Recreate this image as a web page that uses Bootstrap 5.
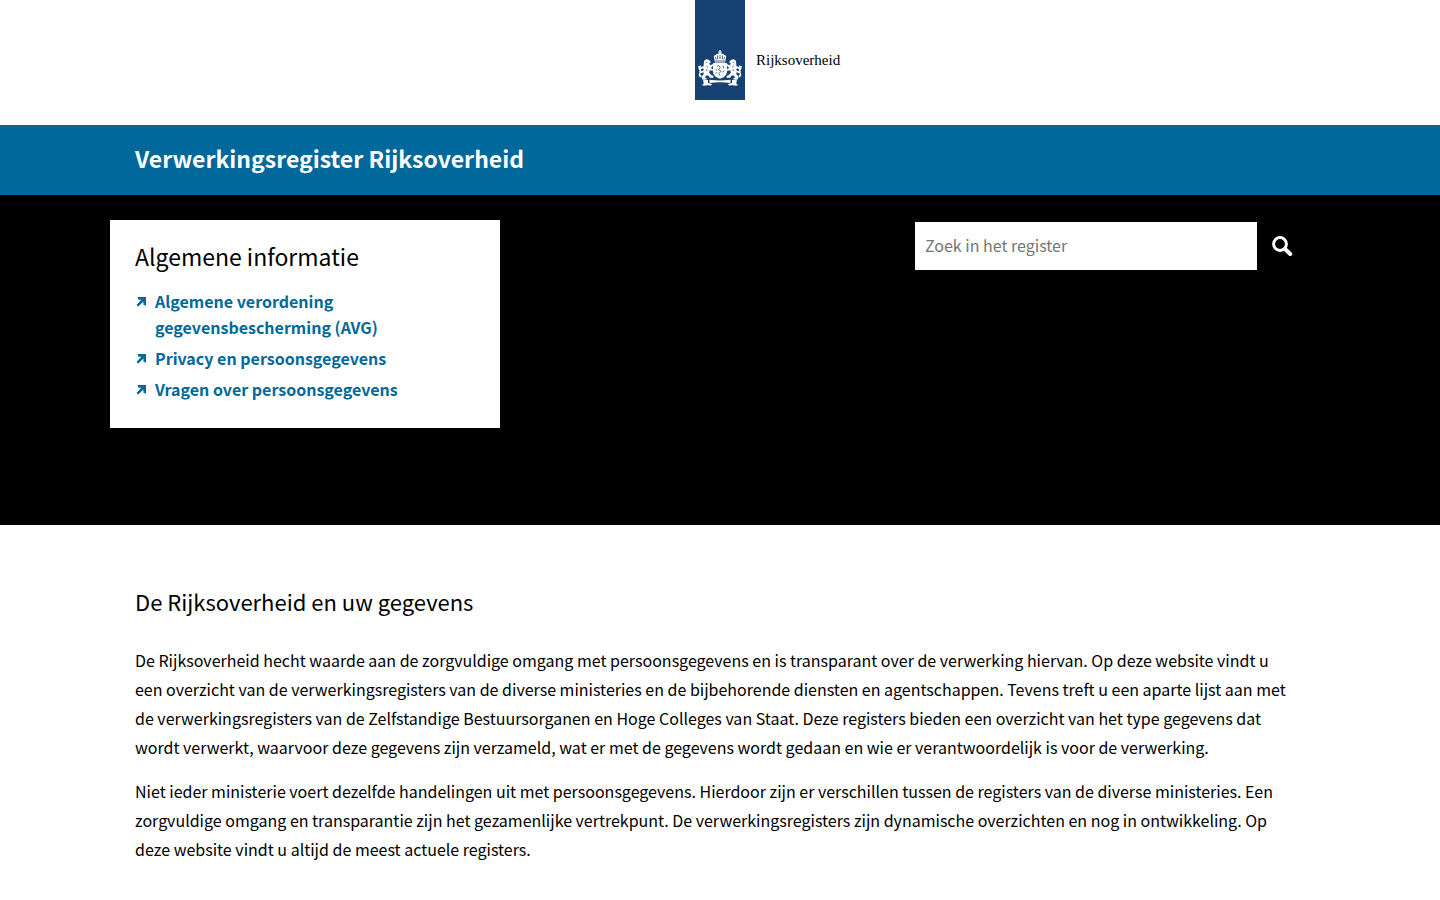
<!DOCTYPE html>
<html lang="nl">
<head>
<meta charset="utf-8">
<meta name="viewport" content="width=device-width, initial-scale=1">
<title>Verwerkingsregister Rijksoverheid</title>
<link rel="stylesheet" href="https://cdn.jsdelivr.net/npm/bootstrap@5.3.0/dist/css/bootstrap.min.css">
<style>
  body { font-family: "Noto Sans CJK JP", "Noto Sans", sans-serif; font-size: 16px; line-height: 29px; color: #000; }
  .site-width { width: 100%; max-width: 1220px; margin-inline: auto; padding-inline: 25px; }
  .logo-bar { height: 125px; }
  .logo-ribbon { width: 50px; height: 100px; background: #154273; flex: none; }
  .logo-side { flex: 1 1 0; }
  .logo-name { font-family: "Liberation Serif", serif; font-size: 15px; line-height: 20px; margin: 50px 0 0 11px; }
  .title-bar { background: #01689b; color: #fff; }
  .title-bar a { display: block; font-size: 23px; line-height: 66px; padding-bottom: 4px; font-weight: 700; }
  .hero { background: #000; min-height: 330px; padding-top: 25px; }
  .info-box { width: 390px; max-width: 100%; background: #fff; padding: 19px 25px 21px; margin-left: -25px; }
  .info-box h2 { font-size: 23px; line-height: 34px; margin-bottom: 15px; font-weight: 400; }
  .info-box li { display: flex; gap: 8px; line-height: 26px; margin-bottom: 5px; }
  .info-box li svg { flex: none; margin-top: 8px; }
  .info-box a { color: #01689b; font-weight: 700; max-width: 260px; }
  .search-form { width: 390px; max-width: 100%; margin-top: 2px; }
  .search-form input { height: 48px; font-size: 16px; line-height: 28px; padding: 9px 10px 11px; color: #000; }
  .search-form input::placeholder { color: #757575; }
  .search-form button { width: 48px; height: 48px; flex: none; }
  main h1 { font-size: 22px; line-height: 32px; font-weight: 400; margin-bottom: 29px; }
  main p { max-width: 1162px; margin-bottom: 15px; }
  main { padding-top: 60px; padding-bottom: 20px; }
</style>
</head>
<body>
<header>
  <div class="logo-bar d-flex">
    <div class="logo-side"></div>
    <svg class="logo-ribbon" viewBox="0 0 50 100" role="img" aria-label="Rijkswapen">
      <g fill="#fff">
        <path d="M24.400 50h1.200v1.400h1.200v1.100h-1.200v1.500h-1.200v-1.500h-1.200v-1.100h1.200z"/>
        <path d="M19 57.800q-.6-2.400 1.800-3 1.200-1.600 4.200-1.600t4.200 1.600q2.400.6 1.800 3l-1 4.700H20z"/>
        <path d="M18 63h14v8.200q0 5.200-7 7.600-7-2.400-7-7.600z"/>
        <g id="bearer">
          <path d="M9 61q2-2.600 4.500-1.200 2.300 1 2.200 3.200l-1.800.6 1.500 1.600 2.600-1.200v1.800L15.800 68l2.200 1.200v1.600l-3.300-.6-.5 2.800 2.200 2 2 1v1.800h-3.800l-.6-1.800-2.400-.8-1.800 2.200 1.800.8v1.400H7.300l-1-3.200 2.400-2.200-.2-2-2.600 1-1.500-1.200.6-1.600 1.500.8 2.400-1.200-.7-1.600-2.800.8-1.500-1 .5-1.600 1.700.6 2.500-1.200z"/>
          <path d="M5.600 77.500q-3-1.800-1.200-4.800 1-2.200-.8-3.600l-.3-3.200 1.800 1 .8 2q1 2.400-.3 4.400-.9 1.700.9 2.800z"/>
          <path d="M3 66.200l2.600-.8 1 1-2 .9z"/>
          <path d="M8 79.600l5 .5v2.800l4 1.100-1 1.600q-4-1-7.500.2L7 84.600l1.800-.8z"/>
        </g>
        <use href="#bearer" transform="matrix(-1 0 0 1 50 0)"/>
        <path d="M14.500 79.800q10.500 1.500 21 0v3.300q-10.500-1.500-21 0z"/>
      </g>
      <g fill="none" stroke="#154273" stroke-width=".8">
        <path d="M20 61h10M22.300 55.500l.4 3.800M27.700 55.500l-.4 3.800M25 55v4M20.300 57.200l.9 2.300M29.700 57.200l-.9 2.300"/>
        <path d="M22 66.500l1.800-1 1.500 2-1.800 2 2.600 1.800-2.200 2.200 1 2.200M28 65.500l.6 2.500M20.800 69.500l1.600.8M29 70.600l-1.400 1.800M20.800 73.200l1.400-.6"/>
        <path d="M11 62l1.200.6M11.300 66l1.500 1M11 70.300l1.500-.4M39 62l-1.200.6M38.700 66l-1.500 1M39 70.300l-1.500-.4"/>
      </g>
    </svg>
    <div class="logo-side"><div class="logo-name">Rijksoverheid</div></div>
  </div>
  <div class="title-bar"><div class="site-width"><a class="text-reset text-decoration-none" href="#">Verwerkingsregister Rijksoverheid</a></div></div>
</header>
<section class="hero">
  <div class="site-width d-flex flex-wrap justify-content-between align-items-start">
    <aside class="info-box">
      <h2>Algemene informatie</h2>
      <ul class="list-unstyled mb-0">
        <li><svg width="12" height="12" viewBox="0 0 12 12" fill="#01689b" aria-hidden="true"><path d="M2.500 1H11v8.800L8.400 8.600V5.500L3.300 10.500 1.500 8.900 6.300 3.700H3.400z"/></svg><a class="text-decoration-none" href="#">Algemene verordening gegevensbescherming (AVG)</a></li>
        <li><svg width="12" height="12" viewBox="0 0 12 12" fill="#01689b" aria-hidden="true"><path d="M2.500 1H11v8.800L8.400 8.600V5.500L3.300 10.500 1.500 8.900 6.300 3.700H3.400z"/></svg><a class="text-decoration-none" href="#">Privacy en persoonsgegevens</a></li>
        <li><svg width="12" height="12" viewBox="0 0 12 12" fill="#01689b" aria-hidden="true"><path d="M2.500 1H11v8.800L8.400 8.600V5.500L3.300 10.500 1.500 8.900 6.300 3.700H3.400z"/></svg><a class="text-decoration-none" href="#">Vragen over persoonsgegevens</a></li>
      </ul>
    </aside>
    <form class="search-form d-flex" role="search">
      <label class="visually-hidden" for="zoek">Zoek in het register</label>
      <input class="form-control border-0 rounded-0" id="zoek" type="search" placeholder="Zoek in het register">
      <button class="btn border-0 rounded-0 p-0 d-flex align-items-center justify-content-center" type="submit" aria-label="Zoeken">
        <svg width="24" height="24" viewBox="0 0 24 24" fill="none" stroke="#fff" aria-hidden="true"><circle cx="11" cy="10" r="6.400" stroke-width="3"/><path d="M16 15l5.200 5" stroke-width="4" stroke-linecap="round"/></svg>
      </button>
    </form>
  </div>
</section>
<main class="site-width">
  <h1>De Rijksoverheid en uw gegevens</h1>
  <p>De Rijksoverheid hecht waarde aan de zorgvuldige omgang met persoonsgegevens en is transparant over de verwerking hiervan. Op deze website vindt u een overzicht van de verwerkingsregisters van de diverse ministeries en de bijbehorende diensten en agentschappen. Tevens treft u een aparte lijst aan met de verwerkingsregisters van de Zelfstandige Bestuursorganen en Hoge Colleges van Staat. Deze registers bieden een overzicht van het type gegevens dat wordt verwerkt, waarvoor deze gegevens zijn verzameld, wat er met de gegevens wordt gedaan en wie er verantwoordelijk is voor de verwerking.</p>
  <p>Niet ieder ministerie voert dezelfde handelingen uit met persoonsgegevens. Hierdoor zijn er verschillen tussen de registers van de diverse ministeries. Een zorgvuldige omgang en transparantie zijn het gezamenlijke vertrekpunt. De verwerkingsregisters zijn dynamische overzichten en nog in ontwikkeling. Op deze website vindt u altijd de meest actuele registers.</p>
</main>
<script src="https://cdn.jsdelivr.net/npm/bootstrap@5.3.0/dist/js/bootstrap.bundle.min.js"></script>
</body>
</html>
